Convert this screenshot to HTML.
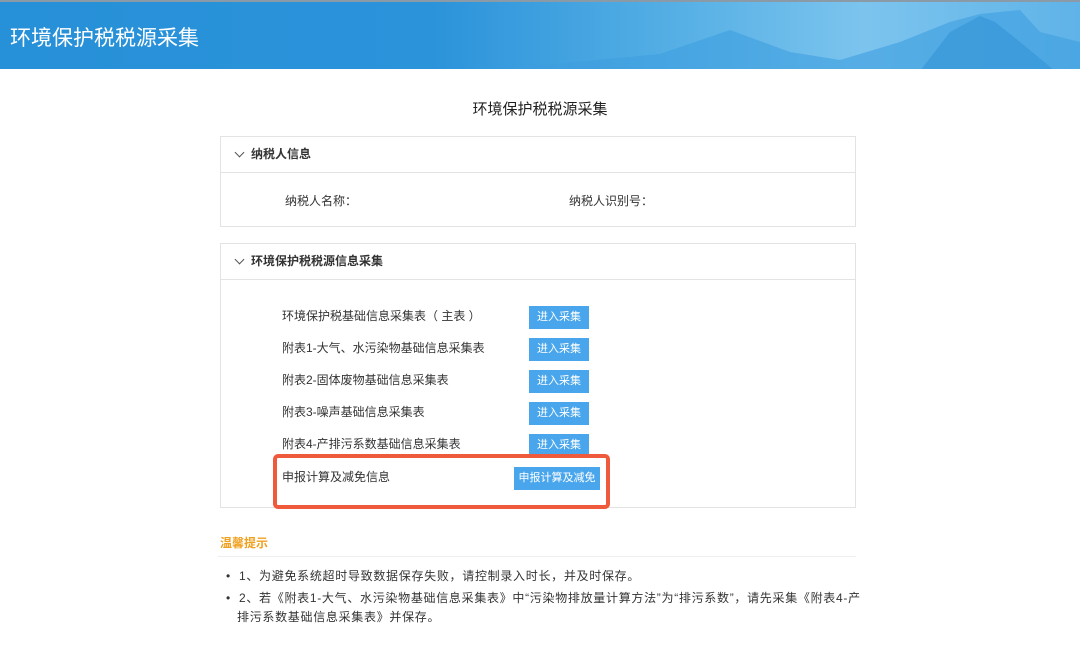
<!DOCTYPE html>
<html><head><meta charset="utf-8">
<style>
*{margin:0;padding:0;box-sizing:border-box}
body{width:1080px;height:654px;background:#fff;font-family:"Liberation Sans","Noto Sans CJK SC",sans-serif;color:#333;position:relative;overflow:hidden;font-size:12px}
.hdr{position:absolute;left:0;top:0;width:1080px;height:69px;background:linear-gradient(90deg,#2690d8 0%,#2b93da 40%,#5ab2e6 65%,#7cc4ee 80%,#5fb3e8 100%);border-top:2px solid #8a9aa6;overflow:hidden}
.hdr h1{position:absolute;left:10px;top:20px;font-size:21px;font-weight:normal;color:#fff}
.box{position:absolute;left:220px;width:636px;border:1px solid #e3e3e3}
.bh{height:36px;border-bottom:1px solid #e3e3e3;line-height:35px;padding-left:30px;font-weight:bold;font-size:12px;color:#333;position:relative}
.bh:before{content:"";position:absolute;left:15px;top:12px;width:6px;height:6px;border-right:1.5px solid #555;border-bottom:1.5px solid #555;transform:rotate(45deg)}
.t{position:absolute;font-size:12px;color:#333}
.tip{letter-spacing:0.7px}
.btn{position:absolute;left:529px;width:60px;height:23px;background:#4aa6ec;color:#fff;font-size:11px;text-align:center;line-height:23px}
</style></head><body>
<div class="hdr"><h1>环境保护税税源采集</h1>
<svg style="position:absolute;left:480px;top:0" width="600" height="69"><path d="M0 69 L180 52 L250 28 L310 50 L360 58 L420 40 L470 20 L500 12 L540 8 L560 30 L600 40 L600 69Z" fill="#3d9fdf" opacity="0.6"/><path d="M440 69 L470 30 L500 14 L515 20 L540 40 L575 69Z" fill="#2e8fd3" opacity="0.5"/></svg>
</div>
<div class="t" style="left:0;width:1080px;text-align:center;top:98px;font-size:15px;color:#222">环境保护税税源采集</div>
<div class="box" style="top:136px;height:91px"><div class="bh">纳税人信息</div></div>
<div class="t" style="left:285px;top:192px">纳税人名称：</div>
<div class="t" style="left:569px;top:192px">纳税人识别号：</div>
<div class="box" style="top:243px;height:265px"><div class="bh">环境保护税税源信息采集</div></div>
<div class="t" style="left:282px;top:307px">环境保护税基础信息采集表（ 主表 ）</div>
<div class="t" style="left:282px;top:339px">附表1-大气、水污染物基础信息采集表</div>
<div class="t" style="left:282px;top:371px">附表2-固体废物基础信息采集表</div>
<div class="t" style="left:282px;top:403px">附表3-噪声基础信息采集表</div>
<div class="t" style="left:282px;top:435px">附表4-产排污系数基础信息采集表</div>
<div class="btn" style="top:306px">进入采集</div>
<div class="btn" style="top:338px">进入采集</div>
<div class="btn" style="top:370px">进入采集</div>
<div class="btn" style="top:402px">进入采集</div>
<div class="btn" style="top:434px">进入采集</div>
<div style="position:absolute;left:273px;top:454px;width:337px;height:55px;border:4px solid #f05a3c;border-radius:5px;background:#fff"></div>
<div class="t" style="left:282px;top:468px">申报计算及减免信息</div>
<div class="btn" style="left:514px;width:86px;top:467px">申报计算及减免</div>
<div class="t" style="left:220px;top:534px;color:#f0a020;font-weight:bold">温馨提示</div>
<div style="position:absolute;left:218px;top:556px;width:638px;height:1px;background:#eee"></div>
<div class="t tip" style="left:226px;top:567px">•&nbsp;&nbsp;1、为避免系统超时导致数据保存失败，请控制录入时长，并及时保存。</div>
<div class="t tip" style="left:226px;top:589px">•&nbsp;&nbsp;2、若《附表1-大气、水污染物基础信息采集表》中“污染物排放量计算方法”为“排污系数”，请先采集《附表4-产</div>
<div class="t tip" style="left:237px;top:608px">排污系数基础信息采集表》并保存。</div>
</body></html>
